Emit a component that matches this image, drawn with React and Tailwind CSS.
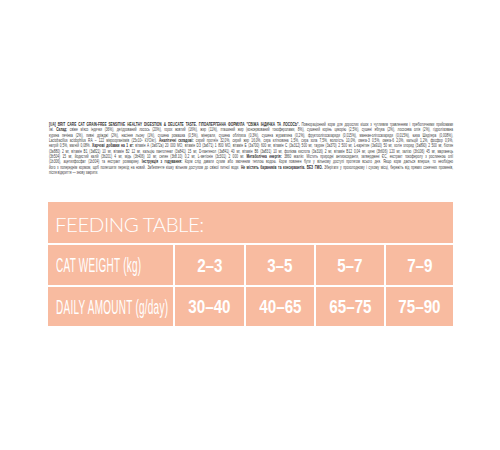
import React from "react";

const lines = [
  [
    { b: true, t: "[UA] BRIT CARE CAT GRAIN-FREE SENSITIVE HEALTHY DIGESTION & DELICATE TASTE. ГІПОАЛЕРГЕННА ФОРМУЛА \"СВІЖА ІНДИЧКА ТА ЛОСОСЬ\". " },
    { t: "Повнораціонний корм для дорослих кішок з чутливим травленням і пребіотичними прийомами" },
  ],
  [
    { t: "їжі. " },
    { b: true, t: "Склад: " },
    { t: "свіже м'ясо індички (36%), дегідрований лосось (20%), горох жовтий (16%), жир (11%), пташиний жир (консервований токоферолами, 8%), сушений корінь цикорію (2,5%), сушені яблука (2%), лососева олія (2%), гідролізована" },
  ],
  [
    { t: "курина печінка (2%), пивні дріжджі (2%), насіння льону (1%), сушена ромашка (0,5%), мінерали, сушена обліпиха (0,3%), сушена журавлина (0,2%), фруктоолігосахариди (0,015%), маннан-олігосахариди (0,015%), юкка Шидігера (0,008%)," },
  ],
  [
    { t: "Lactobacillus acidophilus RA – 122 мікроорганізмів (15x10⁹ КУО/кг). " },
    { b: true, t: "Аналітичні складові: " },
    { t: "сирий протеїн 32,0%, сирий жир 16,0%, сира клітковина 1,5%, сира зола 7,5%, вологість 10,0%, омега-3 0,5%, омега-6 2,0%, кальцій 1,2%, фосфор 0,9%," },
  ],
  [
    { t: "натрій 0,5%, магній 0,08%. " },
    { b: true, t: "Харчові добавки на 1 кг: " },
    { t: "вітамін A (3a672a) 20 000 МО, вітамін D3 (3a671) 1 800 МО, вітамін E (3a700) 600 мг, вітамін C (3a312) 500 мг, таурин (3a370) 2 500 мг, L-карнітин (3a910) 50 мг, холін хлорид (3a890) 2 500 мг, біотин" },
  ],
  [
    { t: "(3a880) 2 мг, вітамін B1 (3a821) 10 мг, вітамін B2 12 мг, кальцію пантотенат (3a841) 15 мг, D-пантенол (3a841) 40 мг, вітамін B6 (3a831) 10 мг, фолієва кислота (3a316) 2 мг, вітамін B12 0,04 мг, цинк (3b606) 120 мг, залізо (3b106) 45 мг, марганець" },
  ],
  [
    { t: "(3b504) 15 мг, йодистий калій (3b201) 4 мг, мідь (3b406) 10 мг, селен (3b8.10) 0,2 мг, L-метіонін (3c301) 2 000 мг. " },
    { b: true, t: "Метаболічна енергія: " },
    { t: "3860 ккал/кг. Містить природні антиоксиданти, затверджені ЄС, екстракт токоферолу з рослинною олії" },
  ],
  [
    { t: "(1b306), ацетилфосфат (1b304) та екстракт розмарину. " },
    { b: true, t: "Інструкція з годування: " },
    { t: "Корм слід давати сухим або змоченим теплою водою. Корм повинен бути у вільному доступі протягом всього дня. Якщо корм дається вперше, то необхідно" },
  ],
  [
    { t: "його з попереднім кормом, щоб полегшити перехід на новий. Забезпечте кішку вільним доступом до свіжої питної води. " },
    { b: true, t: "Не містить барвників та консервантів. БЕЗ ГМО. " },
    { t: "Зберігати у прохолодному і сухому місці, бережіть від прямих сонячних променів," },
  ],
  [{ t: "після відкриття — знову закрити." }],
];

const weights = ["2–3", "3–5", "5–7", "7–9"];
const amounts = ["30–40", "40–65", "65–75", "75–90"];

function Label({ children }) {
  return (
    <div className="flex items-center bg-[#f8bba0] pl-[8px] overflow-hidden">
      <span className="inline-block origin-left scale-x-[0.5] whitespace-nowrap text-[20px] leading-none tracking-[0.5px] text-white font-['Liberation_Sans',Arial,sans-serif]">
        {children}
      </span>
    </div>
  );
}

function Num({ children }) {
  return (
    <div className="flex items-center justify-center bg-[#f8bba0] overflow-hidden">
      <span className="inline-block origin-center scale-x-[0.8] whitespace-nowrap text-[19px] leading-none font-bold text-white font-['Liberation_Sans',Arial,sans-serif]">
        {children}
      </span>
    </div>
  );
}

export default function App() {
  return (
    <div className="w-[500px] h-[450px] bg-white overflow-hidden pt-[122px]">
      <div className="ml-[49px] w-[404px] h-[53px]">
        <div className="w-[590px] origin-top-left scale-x-[0.685] text-[4.7px] leading-[5.33px] text-[#404040] font-['Liberation_Sans',Arial,sans-serif]">
          {lines.map((ln, i) => (
            <div
              key={i}
              className={
                i < lines.length - 1
                  ? "whitespace-nowrap text-justify [text-align-last:justify]"
                  : "whitespace-nowrap"
              }
            >
              {ln.map((s, j) => (
                <span key={j} className={s.b ? "font-bold text-[#2a2a2a]" : ""}>
                  {s.t}
                </span>
              ))}
            </div>
          ))}
        </div>
      </div>

      <div className="ml-[48px] mt-[27px] w-[405px] flex flex-col gap-[2px]">
        <div className="h-[41px] bg-[#f8bba0] flex items-center pl-[7px] pt-[3px]">
          <span className="text-[20.5px] leading-none font-light tracking-[-0.5px] text-white font-['Lato',sans-serif]">
            FEEDING TABLE:
          </span>
        </div>
        <div className="grid grid-cols-[125px_69px_68px_68px_67px] grid-rows-[40px_39px] gap-[2px]">
          <Label>CAT WEIGHT (kg)</Label>
          {weights.map((w) => (
            <Num key={w}>{w}</Num>
          ))}
          <Label>DAILY AMOUNT (g/day)</Label>
          {amounts.map((a) => (
            <Num key={a}>{a}</Num>
          ))}
        </div>
      </div>
    </div>
  );
}
